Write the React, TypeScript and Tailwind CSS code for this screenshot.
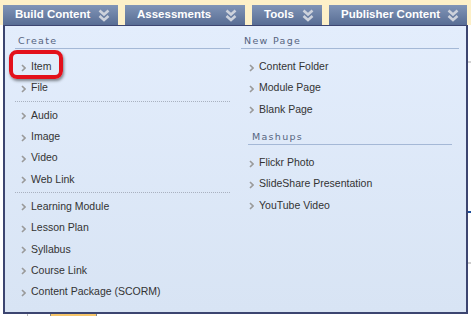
const tabs = [
  { label: "Build Content", w: "w-[115px]" },
  { label: "Assessments", w: "w-[120px]" },
  { label: "Tools", w: "w-[70px]" },
  { label: "Publisher Content", w: "w-[138px]" },
];

type Entry = string | null;

const leftItems: Entry[] = [
  "Item",
  "File",
  null,
  "Audio",
  "Image",
  "Video",
  "Web Link",
  null,
  "Learning Module",
  "Lesson Plan",
  "Syllabus",
  "Course Link",
  "Content Package (SCORM)",
];

function DoubleChevron() {
  return (
    <svg width="12" height="13" viewBox="0 0 12 13" className="shrink-0">
      <path d="M1.5 1.5 L6 5.5 L10.5 1.5" fill="none" stroke="#cdd2dc" strokeWidth="2.6" />
      <path d="M1.5 7 L6 11 L10.5 7" fill="none" stroke="#cdd2dc" strokeWidth="2.6" />
    </svg>
  );
}

function Arrow() {
  return (
    <svg width="5" height="8" viewBox="0 0 5 8" className="mt-[2px] shrink-0">
      <path d="M1 1 L4 4 L1 7" fill="none" stroke="#9a9a9a" strokeWidth="1.6" />
    </svg>
  );
}

function Heading({ label, className = "" }: { label: string; className?: string }) {
  return (
    <div
      className={`box-border flex h-[23px] items-end border-b border-[#a4b8d6] pb-[1px] pl-[3px] text-[9.5px] leading-[12px] tracking-[1.3px] text-[#56647f] ${className}`}
      style={{ fontFamily: '"DejaVu Sans", Verdana, sans-serif' }}
    >
      {label}
    </div>
  );
}

function Row({ label, pad }: { label: string; pad: string }) {
  return (
    <div className={`flex h-[21.3px] items-center gap-[5px] ${pad}`}>
      <Arrow />
      <span className="text-[10.5px] leading-[13px] text-[#333]">{label}</span>
    </div>
  );
}

export default function App() {
  return (
    <div
      className="relative flex h-[316px] w-[471px] flex-col overflow-hidden bg-white"
      style={{ fontFamily: '"Liberation Sans", Arial, sans-serif' }}
    >
      {/* tab bar */}
      <div className="flex h-[25px] shrink-0 items-end gap-[7px] bg-[#fdf0c8] pl-[3px]">
        {tabs.map((t) => (
          <div
            key={t.label}
            className={`flex h-[20px] items-center justify-between bg-gradient-to-b from-[#8195b7] to-[#586d94] pl-[12px] pr-[8px] ${t.w}`}
          >
            <span className="text-[11.5px] font-bold leading-none text-white">{t.label}</span>
            <DoubleChevron />
          </div>
        ))}
      </div>

      <div className="flex flex-1">
        {/* dropdown panel */}
        <div className="ml-[3px] box-border flex h-[289px] w-[465px] border-x-2 border-t border-b-2 border-[#3c4570] bg-gradient-to-b from-[#e3edfc] to-[#d8e4f4]">
          <div className="ml-[10px] w-[215px]">
            <Heading label="Create" />
            <div className="mt-[7px]">
              {leftItems.map((it, i) =>
                it === null ? (
                  <div key={i} className="flex h-[6px] items-center">
                    <div className="w-full border-t border-dotted border-[#a9b1c0]" />
                  </div>
                ) : (
                  <Row key={i} label={it} pad="pl-[6px]" />
                )
              )}
            </div>
          </div>

          <div className="ml-[11px] w-[218px]">
            <Heading label="New Page" />
            <div className="mt-[7px]">
              {["Content Folder", "Module Page", "Blank Page"].map((l) => (
                <Row key={l} label={l} pad="pl-[8px]" />
              ))}
            </div>
            <Heading label="Mashups" className="mx-[7px] mt-[2px] pl-[4px]" />
            <div className="mt-[7px]">
              {["Flickr Photo", "SlideShare Presentation", "YouTube Video"].map((l) => (
                <Row key={l} label={l} pad="pl-[8px]" />
              ))}
            </div>
          </div>
        </div>

        {/* page content peeking out on the right */}
        <div className="flex flex-1 flex-col">
          <div className="mt-[36px] h-[2px] bg-[#d4d4d4]" />
          <div className="mt-[148px] h-[2px] bg-[#1f4f9a]" />
          <div className="mt-[49px] h-[2px] bg-[#cfcfcf]" />
        </div>
      </div>

      {/* page content peeking out below */}
      <div className="flex h-[2px] shrink-0">
        <div className="ml-[27px] w-px bg-[#bbb]" />
        <div className="ml-[22px] box-border w-[47px] border-x border-[#888] bg-[#f7c66a]" />
      </div>

      {/* annotation highlight */}
      <div className="absolute left-[9px] top-[50px] box-border h-[29px] w-[54px] rounded-[8px] border-[4px] border-[#e3101b] shadow-[1px_2px_3px_rgba(0,0,0,0.45)]" />
    </div>
  );
}
